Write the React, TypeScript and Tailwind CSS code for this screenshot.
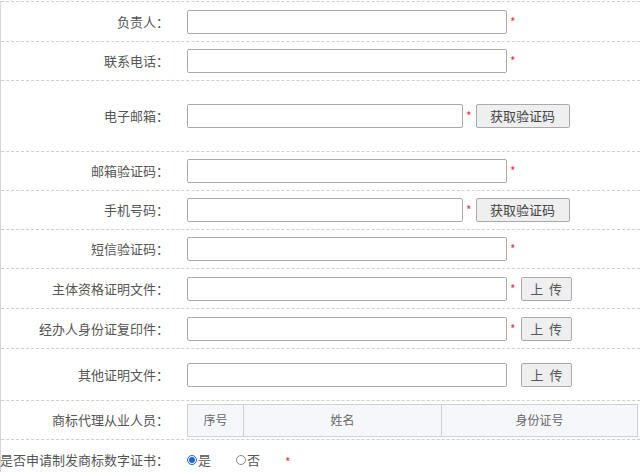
import type { ReactNode } from "react";

const font = { fontFamily: '"Noto Sans CJK SC", "Noto Sans", sans-serif' };

function Star() {
  return <span className="ml-[3px] text-[12px] leading-none text-[#e5393c]">*</span>;
}

function Field({ w = "w-[320px]" }: { w?: string }) {
  return <input className={`${w} h-[24px] shrink-0 rounded-[2px] border border-[#a9a9a9] bg-white outline-none`} />;
}

function CodeButton() {
  return (
    <button className="ml-[4px] h-[24px] w-[94px] rounded-[2px] border border-[#a9a9a9] bg-[#efefef] text-[13px] text-[#444]">
      获取验证码
    </button>
  );
}

function UploadButton({ gap = "ml-[5px]" }: { gap?: string }) {
  return (
    <button className={`${gap} h-[24px] w-[51px] rounded-[2px] border border-[#a9a9a9] bg-[#efefef] text-[13px] text-[#555]`}>
      上&nbsp;&nbsp;传
    </button>
  );
}

function Row({ label, h, children }: { label: string; h: string; children?: ReactNode }) {
  return (
    <div className={`flex ${h} items-center border-t border-dashed border-[#cfcfcf]`}>
      <div className="flex w-[168px] shrink-0 justify-end whitespace-nowrap text-[13px] text-[#555]">{label}</div>
      <div className="ml-[18px] flex items-center">{children}</div>
    </div>
  );
}

export default function App() {
  return (
    <div className="h-[472px] w-[640px] overflow-hidden bg-white" style={font}>
      <div className="mt-px border-l border-[#d6d6d6]">
        <Row label="负责人：" h="h-[40px]">
          <Field />
          <Star />
        </Row>
        <Row label="联系电话：" h="h-[39px]">
          <Field />
          <Star />
        </Row>
        <Row label="电子邮箱：" h="h-[71px]">
          <Field w="w-[276px]" />
          <Star />
          <CodeButton />
        </Row>
        <Row label="邮箱验证码：" h="h-[39px]">
          <Field />
          <Star />
        </Row>
        <Row label="手机号码：" h="h-[39px]">
          <Field w="w-[276px]" />
          <Star />
          <CodeButton />
        </Row>
        <Row label="短信验证码：" h="h-[39px]">
          <Field />
          <Star />
        </Row>
        <Row label="主体资格证明文件：" h="h-[40px]">
          <Field />
          <Star />
          <UploadButton />
        </Row>
        <Row label="经办人身份证复印件：" h="h-[40px]">
          <Field />
          <Star />
          <UploadButton />
        </Row>
        <Row label="其他证明文件：" h="h-[52px]">
          <Field />
          <UploadButton gap="ml-[14px]" />
        </Row>
        <Row label="商标代理从业人员：" h="h-[39px]">
          <div className="flex h-[33px] w-[451px] border border-[#cdd0d6] bg-[#f5f7fa] text-[12px] text-[#666]">
            <div className="flex w-[56px] items-center justify-center border-r border-[#cdd0d6]">序号</div>
            <div className="flex w-[198px] items-center justify-center border-r border-[#cdd0d6]">姓名</div>
            <div className="flex flex-1 items-center justify-center">身份证号</div>
          </div>
        </Row>
        <Row label="是否申请制发商标数字证书：" h="h-[40px]">
          <span className="flex items-center text-[13px] text-[#555]">
            <span className="flex h-[10px] w-[10px] items-center justify-center rounded-full border border-[#1a66d6] bg-white">
              <span className="h-[6px] w-[6px] rounded-full bg-[#1a66d6]" />
            </span>
            <span className="ml-px">是</span>
          </span>
          <span className="ml-[25px] flex items-center text-[13px] text-[#555]">
            <span className="h-[10px] w-[10px] rounded-full border border-[#8a8a8a] bg-white" />
            <span className="ml-px">否</span>
          </span>
          <span className="ml-[22px]">
            <Star />
          </span>
        </Row>
      </div>
    </div>
  );
}
